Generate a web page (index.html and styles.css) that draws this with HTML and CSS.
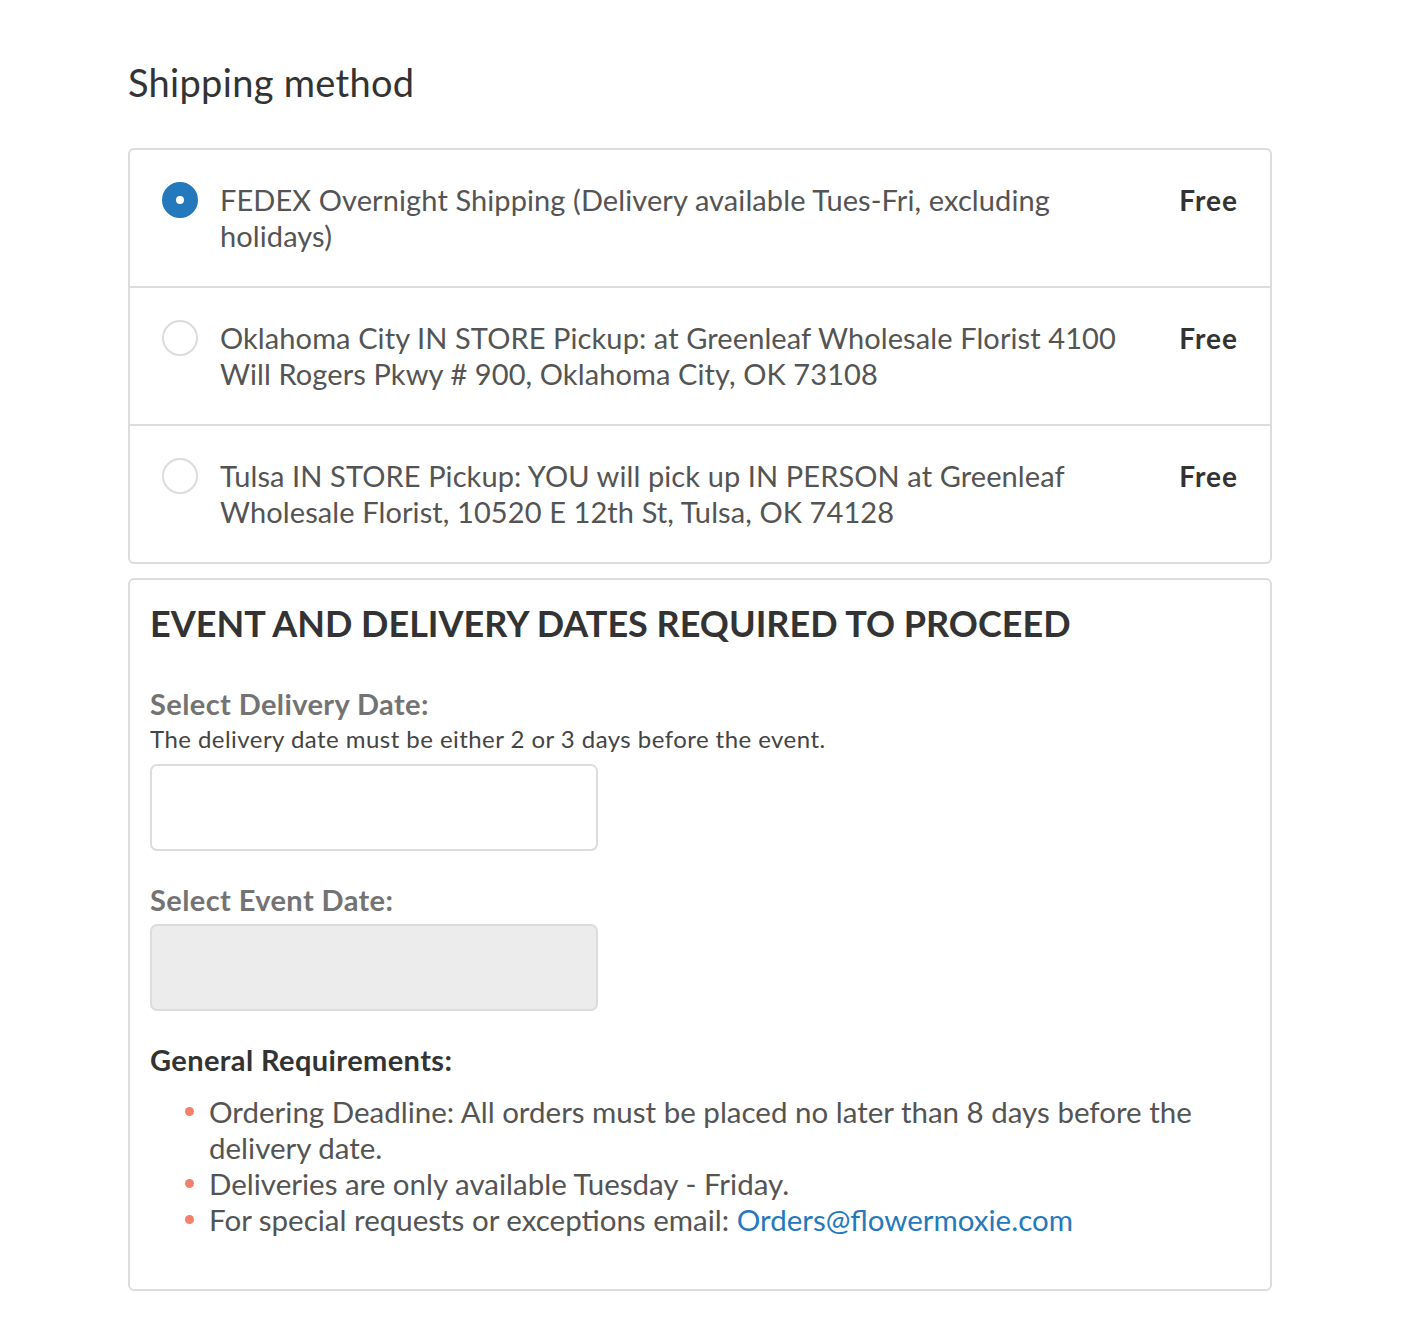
FILE: index.html
```html
<!DOCTYPE html>
<html lang="en">
<head>
<meta charset="utf-8">
<title>Shipping method</title>
<link rel="stylesheet" href="styles.css">
</head>
<body>
<main class="page">
  <h2 class="section-title">Shipping method</h2>

  <div class="methods">
    <label class="method">
      <span class="radio radio--checked"></span>
      <span class="method-name">FEDEX Overnight Shipping (Delivery available Tues-Fri, excluding holidays)</span>
      <span class="method-price">Free</span>
    </label>
    <label class="method">
      <span class="radio"></span>
      <span class="method-name">Oklahoma City IN STORE Pickup: at Greenleaf Wholesale Florist 4100 Will Rogers Pkwy # 900, Oklahoma City, OK 73108</span>
      <span class="method-price">Free</span>
    </label>
    <label class="method">
      <span class="radio"></span>
      <span class="method-name">Tulsa IN STORE Pickup: YOU will pick up IN PERSON at Greenleaf Wholesale Florist, 10520 E 12th St, Tulsa, OK 74128</span>
      <span class="method-price">Free</span>
    </label>
  </div>

  <section class="dates">
    <h3 class="dates-title">EVENT AND DELIVERY DATES REQUIRED TO PROCEED</h3>

    <div class="field">
      <div class="field-label">Select Delivery Date:</div>
      <div class="field-help">The delivery date must be either 2 or 3 days before the event.</div>
      <input class="field-input" type="text">
    </div>

    <div class="field">
      <div class="field-label">Select Event Date:</div>
      <input class="field-input field-input--disabled" type="text" disabled>
    </div>

    <div class="reqs">
      <div class="reqs-title">General Requirements:</div>
      <ul class="reqs-list">
        <li>Ordering Deadline: All orders must be placed no later than 8 days before the delivery date.</li>
        <li>Deliveries are only available Tuesday - Friday.</li>
        <li>For special requests or exceptions email: <a class="link" href="#">Orders@flowermoxie.com</a></li>
      </ul>
    </div>
  </section>
</main>
</body>
</html>
```

FILE: styles.css
```css
* { box-sizing: border-box; }

html, body {
  margin: 0;
  padding: 0;
  background: #fff;
}

body {
  font-family: "Lato", "Open Sans", sans-serif;
  color: #545454;
}

.page {
  width: 1144px;
  margin: 0 0 0 128px;
  padding-top: 60px;
  padding-bottom: 28px;
}

.section-title {
  margin: 0 0 44px 0;
  font-size: 38px;
  font-weight: 400;
  line-height: 44px;
  letter-spacing: 0.3px;
  color: #333;
}

.methods {
  border: 2px solid #dcdcdc;
  border-radius: 6px;
}

.method {
  display: flex;
  align-items: flex-start;
  padding: 32px 32px 30px 32px;
  min-height: 138px;
  border-top: 2px solid #dcdcdc;
}

.method:first-child {
  border-top: none;
  min-height: 136px;
}

.radio {
  flex: 0 0 36px;
  width: 36px;
  height: 36px;
  border-radius: 50%;
  border: 2px solid #dcdcdc;
  background: #fff;
  margin-top: 0;
  margin-right: 22px;
  display: flex;
  align-items: center;
  justify-content: center;
}

.radio--checked {
  background: #2479bd;
  border-color: #2479bd;
}

.radio--checked::after {
  content: "";
  width: 8px;
  height: 8px;
  border-radius: 50%;
  background: #fff;
}

.method-name {
  flex: 1 1 auto;
  font-size: 29px;
  line-height: 36px;
  letter-spacing: 0.1px;
  color: #545454;
  padding-right: 30px;
}

.method-price {
  flex: 0 0 auto;
  font-size: 28px;
  line-height: 36px;
  font-weight: 700;
  letter-spacing: 1px;
  color: #333;
}

.dates {
  margin-top: 14px;
  border: 2px solid #dcdcdc;
  border-radius: 6px;
  padding: 21px 20px 51px 20px;
}

.dates-title {
  margin: 0 0 42px 0;
  font-size: 36px;
  line-height: 44px;
  font-weight: 700;
  color: #333;
}

.field {
  margin-bottom: 32px;
}

.field-label {
  font-size: 29px;
  line-height: 34px;
  font-weight: 700;
  letter-spacing: 0.4px;
  color: #737373;
}

.field-help {
  font-size: 24px;
  line-height: 30px;
  letter-spacing: 0.45px;
  color: #444;
  margin-top: 3px;
  margin-bottom: 10px;
}

.field-input {
  display: block;
  width: 448px;
  height: 87px;
  margin-top: 7px;
  border: 2px solid #dcdcdc;
  border-radius: 7px;
  background: #fff;
  font: inherit;
  padding: 0 16px;
}

.field-help + .field-input {
  margin-top: 0;
}

.field-input--disabled {
  background: #ececec;
}

.reqs {
  margin-top: 2px;
}

.reqs-title {
  font-size: 29px;
  line-height: 34px;
  font-weight: 700;
  letter-spacing: 0.4px;
  color: #333;
  margin-bottom: 17px;
}

.reqs-list {
  list-style: none;
  margin: 0;
  padding: 0 0 0 35px;
}

.reqs-list li {
  position: relative;
  padding-left: 24px;
  font-size: 29.5px;
  line-height: 36px;
  color: #545454;
}

.reqs-list li::before {
  content: "";
  position: absolute;
  left: 0;
  top: 13px;
  width: 9px;
  height: 9px;
  border-radius: 50%;
  background: #f2816b;
}

.link {
  color: #2479bd;
  text-decoration: none;
}
```
